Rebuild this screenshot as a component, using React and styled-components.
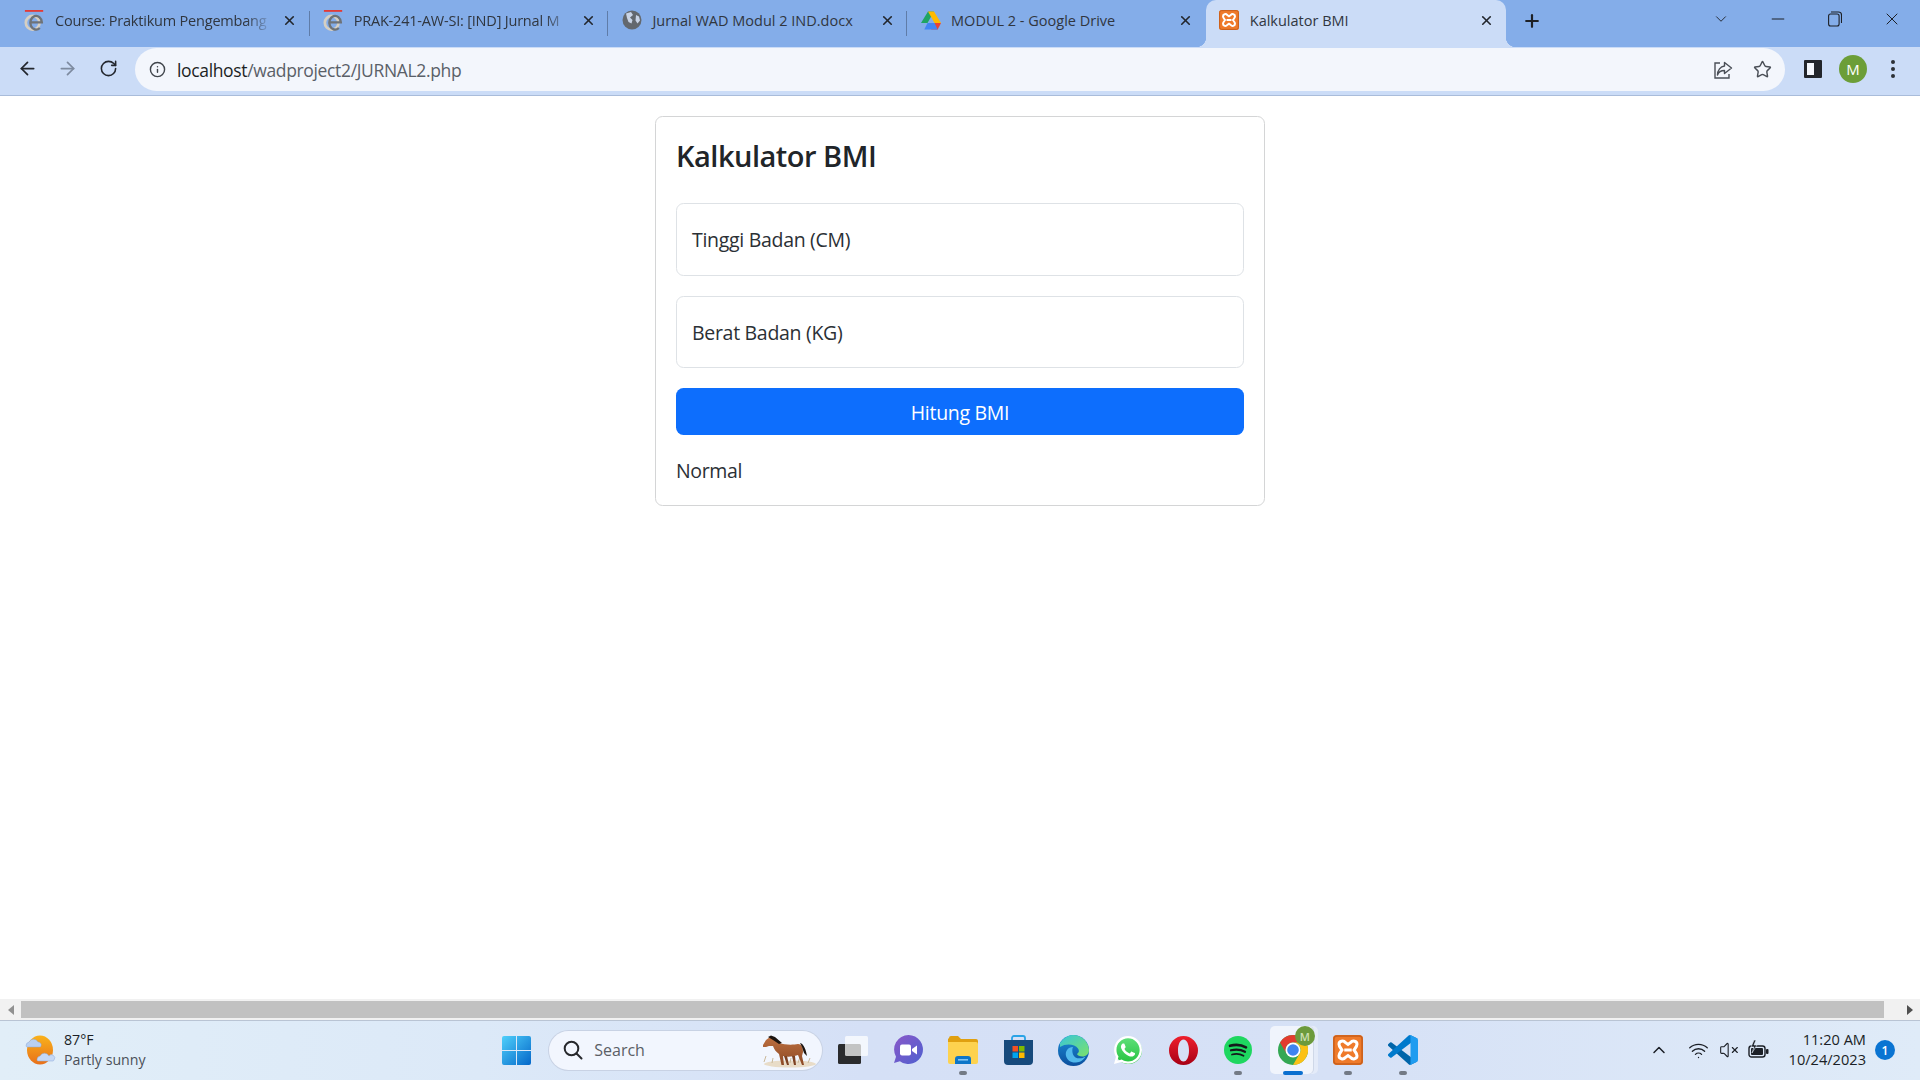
import React from "react";
import styled, { createGlobalStyle } from "styled-components";
import {
  ArrowLeft,
  ArrowRight,
  RotateCw,
  Info,
  Star,
  X,
  Plus,
  ChevronDown,
  ChevronUp,
  Minus,
  Wifi,
  VolumeX,
} from "lucide-react";
import { FaWhatsapp } from "react-icons/fa";

const GlobalStyle = createGlobalStyle`
  html, body { margin: 0; height: 100%; overflow: hidden; background: #fff; }
  #root { height: 100%; }
  * { box-sizing: border-box; }
`;

const uiFont = `"Open Sans", "Noto Sans", "Liberation Sans", sans-serif`;

const Screen = styled.div`
  width: 1920px;
  height: 1080px;
  display: flex;
  flex-direction: column;
  font-family: ${uiFont};
  color: #212529;
`;

/* browser chrome */
const TabStrip = styled.div`
  height: 47px;
  flex: none;
  background: #84ade9;
  display: flex;
  padding-left: 11px;
`;

const TabBox = styled.div`
  position: relative;
  width: ${(p) => (p.$active ? "300.5px" : "298.7px")};
  height: 47px;
  display: flex;
  align-items: center;
  gap: 10px;
  padding: 0 12.5px 7px 13px;
  border-radius: 10px 10px 0 0;
  background: ${(p) => (p.$active ? "#cbdcf7" : "transparent")};

  &::after {
    content: "";
    display: ${(p) => (p.$sep ? "block" : "none")};
    position: absolute;
    right: 0;
    top: 11px;
    height: 25px;
    width: 1px;
    background: #5f7ca8;
  }
`;

const Flare = styled.span`
  position: absolute;
  bottom: 0;
  width: 10px;
  height: 10px;
  ${(p) =>
    p.$left
      ? `left: -10px; background: radial-gradient(circle at 0 0, transparent 10px, #cbdcf7 10.5px);`
      : `right: -10px; background: radial-gradient(circle at 100% 0, transparent 10px, #cbdcf7 10.5px);`}
`;

const TabIcon = styled.span`
  width: 21px;
  height: 21px;
  flex: none;
  display: flex;
  align-items: center;
  justify-content: center;
`;

const TabTitle = styled.span`
  flex: 1;
  min-width: 0;
  font-size: 14.5px;
  letter-spacing: ${(p) => (p.$fade ? "-0.2px" : "0")};
  white-space: nowrap;
  color: #30363f;
  ${(p) =>
    p.$fade &&
    `mask-image: linear-gradient(to right, #000 calc(100% - 26px), transparent 100%);`}
`;

const TabClose = styled.span`
  flex: none;
  display: flex;
  color: #22262c;
`;

const NewTab = styled.span`
  display: flex;
  align-items: center;
  margin: 0 0 5px 16px;
  color: #1d2026;
`;

const WindowControls = styled.div`
  margin-left: auto;
  display: flex;
  align-items: center;
  padding: 0 0 9px 0;
  color: #1d2026;
`;

const WindowControl = styled.span`
  width: 57px;
  display: flex;
  justify-content: center;
`;

const Toolbar = styled.div`
  height: 49px;
  flex: none;
  background: #cbdcf7;
  border-bottom: 1px solid #a9bcda;
  display: flex;
  align-items: center;
  padding: 0 15px 3px 15px;
`;

const NavButton = styled.span`
  width: 24px;
  height: 24px;
  margin: 0 16.5px 2px 0;
  display: flex;
  align-items: center;
  justify-content: center;
  color: ${(p) => (p.$off ? "#7e8ba0" : "#23272e")};
`;

const Omnibox = styled.div`
  width: 1650px;
  height: 43px;
  margin-left: -1.5px;
  border-radius: 22px;
  background: #f3f6fc;
  display: flex;
  align-items: center;
  padding: 0 13px 0 14px;
`;

const SiteInfo = styled.span`
  display: flex;
  color: #3f444b;
  margin-right: 11px;
`;

const UrlText = styled.span`
  font-size: 17.5px;
  letter-spacing: -0.35px;
  color: #5a6068;
  flex: 1;
`;

const UrlHost = styled.span`
  color: #1c1f24;
`;

const OmniActions = styled.div`
  display: flex;
  align-items: center;
  gap: 20px;
  color: #4a4f57;
`;

const ToolActions = styled.div`
  display: flex;
  align-items: center;
  margin: 0 0 2px 19px;
  gap: 14px;
`;

const SidePanelIcon = styled.span`
  width: 18px;
  height: 18px;
  border: 3px solid #22252b;
  border-right-width: 8px;
  border-radius: 1px;
  background: #f3f6fc;
  margin-right: 3px;
`;

const Avatar = styled.span`
  width: 28px;
  height: 28px;
  border-radius: 50%;
  background: #6c9e38;
  color: #fff;
  font-size: 15px;
  display: flex;
  align-items: center;
  justify-content: center;
`;

const MenuDots = styled.span`
  display: flex;
  flex-direction: column;
  gap: 3px;
  margin-left: 10px;
  i {
    width: 4px;
    height: 4px;
    border-radius: 50%;
    background: #2c3036;
  }
`;

/* page */
const Page = styled.main`
  flex: 1;
  min-height: 0;
  background: #fff;
  padding-top: 20px;
`;

const Card = styled.section`
  width: 610px;
  height: 390px;
  margin: 0 auto;
  padding: 20px;
  border: 1.25px solid #d4d5d6;
  border-radius: 7.5px;
  background: #fff;
`;

const CardTitle = styled.h3`
  margin: -1px 0 27px;
  font-size: 29px;
  font-weight: 600;
  line-height: 40px;
  letter-spacing: -0.5px;
  color: #212529;
`;

const Field = styled.label`
  height: 72.5px;
  margin-bottom: 20px;
  display: flex;
  align-items: center;
  padding: 1px 0 0 15px;
  font-size: 19.5px;
  letter-spacing: -0.3px;
  border: 1.25px solid #dee2e6;
  border-radius: 7.5px;
  color: #2b3035;
`;

const SubmitButton = styled.button`
  display: block;
  width: 100%;
  height: 47px;
  padding: 1px 0 0;
  border: none;
  border-radius: 7.5px;
  background: #0d6efd;
  color: #fff;
  font-family: ${uiFont};
  font-size: 19.5px;
  letter-spacing: -0.3px;
`;

const ResultText = styled.p`
  margin: 21px 0 0;
  font-size: 19.5px;
  line-height: 30px;
  letter-spacing: -0.35px;
  color: #2b3035;
`;

/* horizontal scrollbar */
const ScrollBar = styled.div`
  height: 21px;
  flex: none;
  background: #f1f1f1;
  display: flex;
  align-items: center;
`;

const ScrollArrow = styled.span`
  width: 21px;
  flex: none;
  display: flex;
  justify-content: center;
  &::before {
    content: "";
    border-style: solid;
    border-width: 5px 0 5px 6px;
    border-color: transparent transparent transparent #505050;
    transform: ${(p) => (p.$left ? "rotate(180deg)" : "none")};
    opacity: ${(p) => (p.$left ? 0.6 : 1)};
  }
`;

const ScrollThumb = styled.span`
  flex: 1;
  height: 17px;
  background: #c1c1c1;
  margin-right: 15px;
`;

/* windows taskbar */
const Taskbar = styled.footer`
  height: 60px;
  flex: none;
  padding-bottom: 2px;
  border-top: 1px solid #b9c4d4;
  background: linear-gradient(90deg, #e1eef8 0%, #dce9f8 25%, #d5e0f6 45%, #d6e1f6 70%, #dfebf8 100%);
  display: grid;
  grid-template-columns: 1fr auto 1fr;
  align-items: center;
`;

const Weather = styled.div`
  display: flex;
  align-items: center;
  gap: 8px;
  padding-left: 24px;
`;

const WeatherText = styled.div`
  font-size: 14.2px;
  line-height: 20px;
  margin-bottom: 1px;
  color: #1b1f26;
  small {
    display: block;
    font-size: 14.2px;
    color: #4b5058;
  }
`;

const AppRow = styled.div`
  display: flex;
  align-items: center;
`;

const AppSlot = styled.div`
  position: relative;
  width: 55px;
  height: 58px;
  display: flex;
  align-items: center;
  justify-content: center;
  svg {
    position: relative;
  }
`;

const Pip = styled.span`
  position: absolute;
  left: 50%;
  bottom: 4px;
  width: ${(p) => (p.$wide ? "20px" : "8px")};
  height: 4px;
  margin-left: ${(p) => (p.$wide ? "-10px" : "-4px")};
  border-radius: 2px;
  background: ${(p) => (p.$wide ? "#0b6fcf" : "#737a85")};
`;

const ActiveBack = styled.span`
  position: absolute;
  left: 4px;
  top: 5px;
  width: 48px;
  height: 48px;
  border-radius: 5px;
  background: rgba(255, 255, 255, 0.35);
  &::before {
    content: "";
    position: absolute;
    inset: 0 5px 0 0;
    border-radius: 5px;
    background: rgba(255, 255, 255, 0.45);
    box-shadow: 1px 0 0 rgba(170, 180, 200, 0.35);
  }
`;

const AppBadge = styled.span`
  position: absolute;
  top: 5px;
  right: 6px;
  width: 20px;
  height: 20px;
  border-radius: 50%;
  background: #6c9a3c;
  color: #cfe0b5;
  font-size: 11px;
  font-weight: 600;
  display: flex;
  align-items: center;
  justify-content: center;
`;

const WhatsappMark = styled.span`
  position: relative;
  width: 32px;
  height: 32px;
  display: flex;
  align-items: center;
  justify-content: center;
  color: #fff;
  &::before {
    content: "";
    position: absolute;
    inset: 2.5px;
    border-radius: 50%;
    background: linear-gradient(#5fe07a, #25c23f);
  }
`;

const SearchPill = styled.div`
  width: 273px;
  height: 39px;
  margin: 0 3.5px 0 5px;
  border-radius: 20px;
  background: #f2f6fe;
  box-shadow: 0 0 0 1px #c8d2e4;
  display: flex;
  align-items: center;
  padding: 0 6px 0 14px;
  overflow: hidden;
`;

const SearchLabel = styled.span`
  font-size: 16px;
  color: #5b5f66;
  margin-left: 11px;
  flex: 1;
`;

const Tray = styled.div`
  display: flex;
  align-items: center;
  justify-content: flex-end;
  padding-right: 25px;
  color: #1b1f26;
`;

const TrayIcons = styled.div`
  display: flex;
  align-items: center;
  gap: 9.5px;
  margin-right: 19.5px;
`;

const TrayChevron = styled.span`
  display: flex;
  margin-right: 19px;
`;

const Clock = styled.div`
  text-align: right;
  font-size: 14.6px;
  line-height: 20px;
  margin-bottom: 2px;
  color: #1b1f26;
`;

const NotifyBadge = styled.span`
  width: 20px;
  height: 20px;
  margin-left: 9px;
  border-radius: 50%;
  background: #0a74d2;
  color: #fff;
  font-size: 12px;
  font-weight: 600;
  display: flex;
  align-items: center;
  justify-content: center;
`;

/* drawn icons */
const MoodleIcon = () => (
  <svg width="23" height="25" viewBox="0 0 23 25">
    <rect x="1" y="1" width="20" height="2" fill="#e23b37" />
    <circle cx="9.5" cy="15" r="7.5" fill="none" stroke="#d6cfc2" strokeWidth="3" />
    <path d="M7 14.5h12.5a6.3 7.5 0 1 0-2.2 6.2" fill="none" stroke="#6e7378" strokeWidth="2.6" />
  </svg>
);

const GlobeIcon = () => (
  <svg width="20" height="20" viewBox="0 0 20 20">
    <circle cx="10" cy="10" r="9.5" fill="#63686e" />
    <path d="M4 3.5 9 2l2 3-3 2.5 2.5 2.5-1 3.5-3-1.5L5 8z" fill="#c9d4e6" />
    <path d="M14 5l3 1.5 1 4-2.5 3-2-3z" fill="#c9d4e6" />
  </svg>
);

const DriveIcon = () => (
  <svg width="20" height="19" viewBox="0 0 20 18">
    <path d="M7 0h6l-6.5 11.5h-6.5z" fill="#1fa463" />
    <path d="M7 0h6l7 11.5h-6.5z" fill="#ffba00" />
    <path d="M13.5 11.5H20L16.7 18H10z" fill="#ea4335" />
    <path d="M3.3 18 6.5 11.5h7L16.7 18z" fill="#4285f4" />
  </svg>
);

const XamppIcon = ({ size = 20 }) => (
  <svg width={size} height={size} viewBox="0 0 20 20">
    <rect width="20" height="20" rx="2.5" fill="#ef7a2a" />
    <rect x="0.6" y="0.6" width="18.8" height="18.8" rx="2" fill="none" stroke="#c95f1b" strokeWidth="1" />
    <path
      d="M4 6.2C4 4 7 3.4 8.2 5l1.8 1.3L11.8 5c1.2-1.6 4.2-1 4.2 1.2 0 1.4-1 2.3-2 3.8 1 1.5 2 2.4 2 3.8 0 2.2-3 2.8-4.2 1.2L10 13.7 8.2 15C7 16.6 4 16 4 13.8c0-1.4 1-2.3 2-3.8-1-1.5-2-2.4-2-3.8z"
      fill="none"
      stroke="#fff"
      strokeWidth="2"
    />
    <path d="M7.5 10h5" stroke="#fff" strokeWidth="2" />
  </svg>
);

const ShareIcon = () => (
  <svg width="20" height="20" viewBox="0 0 20 20" fill="none" stroke="currentColor" strokeWidth="1.4">
    <path d="M7 3H2v15h14v-4" />
    <path d="M11.5 2.5 18.5 8l-7 5.5V10.5C8 10.5 5.5 12 4.5 15c0-5 3-8.5 7-9z" strokeLinejoin="round" />
  </svg>
);

const RestoreIcon = () => (
  <svg width="14" height="16" viewBox="0 0 14 16" fill="none" stroke="currentColor" strokeWidth="1.1">
    <rect x="0.6" y="3" width="10.5" height="12" rx="2" />
    <path d="M3 1h7.5a3 3 0 0 1 3 3v8" />
  </svg>
);

const WeatherIcon = () => (
  <svg width="32" height="30" viewBox="0 0 32 30">
    <defs>
      <linearGradient id="sun" x1="0" y1="0" x2="0" y2="1">
        <stop offset="0" stopColor="#f9b21b" />
        <stop offset="1" stopColor="#e8701a" />
      </linearGradient>
    </defs>
    <ellipse cx="16" cy="15" rx="13" ry="14.5" fill="url(#sun)" />
    <path d="M2 11a4 4 0 0 1 3-4 5 5 0 0 1 9 0 3 3 0 0 1 3 4 1.5 1.5 0 0 1-1 1H3a1.5 1.5 0 0 1-1-1z" fill="#b9d0f2" stroke="#8caadb" strokeWidth="0.5" />
    <path d="M13 25a4 4 0 0 1 3-4 5 5 0 0 1 9 0 3 3 0 0 1 5 4 1.5 1.5 0 0 1-1 1H14a1.5 1.5 0 0 1-1-1z" fill="#c5d8f5" stroke="#8caadb" strokeWidth="0.5" />
  </svg>
);

const WindowsLogo = () => (
  <svg width="29" height="29" viewBox="0 0 29 29">
    <defs>
      <linearGradient id="win" x1="0" y1="0" x2="1" y2="1">
        <stop offset="0" stopColor="#4fd0fb" />
        <stop offset="1" stopColor="#0467c9" />
      </linearGradient>
    </defs>
    <path d="M2 0h12v14H0V2a2 2 0 0 1 2-2zM15 0h12a2 2 0 0 1 2 2v12H15zM0 15h14v14H2a2 2 0 0 1-2-2zM15 15h14v12a2 2 0 0 1-2 2H15z" fill="url(#win)" />
  </svg>
);

const SearchGlyph = () => (
  <svg width="20" height="20" viewBox="0 0 20 20" fill="none" stroke="#26282c" strokeWidth="2">
    <circle cx="8.5" cy="8.5" r="6.8" />
    <path d="M13.5 13.5 18.5 18.5" strokeLinecap="round" />
  </svg>
);

const HorseArt = () => (
  <svg width="56" height="37" viewBox="0 0 56 37">
    <defs>
      <linearGradient id="coat" x1="0" y1="0" x2="0" y2="1">
        <stop offset="0" stopColor="#bd6f40" />
        <stop offset="1" stopColor="#8d4a26" />
      </linearGradient>
    </defs>
    <ellipse cx="30" cy="32" rx="26" ry="3.5" fill="#e8dcc8" />
    <path d="M4 30l2-6M12 31l1-5M30 31l1-5M38 31l2-6M48 31l2-5" stroke="#c9b899" strokeWidth="1" />
    <path
      d="M3 13 6 8l4-3 4 2 5 4c6 2 14 2 19 1 4 0 5 4 5 8l-1 4 2 9h-2l-4-10c-6 2-11 2-15 1l1 9h-2.5L19 22c-3-2-5-5-6-8H9l-3 1H3z"
      fill="url(#coat)"
    />
    <path d="M27 24l2 9h-2l-3-9zM35 24l1 9h-2l-2-9z" fill="#7d4122" />
    <path d="M8 5l3-1.500 4 1.500 7 6-3 1-6-4z" fill="#1d1510" />
    <path d="M40 11c4 1 6 7 7 13l-3-3-2-6z" fill="#1d1510" />
  </svg>
);

const TaskViewIcon = () => (
  <svg width="30" height="28" viewBox="0 0 30 28">
    <rect x="0" y="8" width="23" height="20" rx="1.5" fill="#2a2b2d" />
    <rect x="7" y="0" width="23" height="20" rx="1.5" fill="#fff" fillOpacity="0.72" />
  </svg>
);

const MeetIcon = () => (
  <svg width="30" height="30" viewBox="0 0 30 30">
    <defs>
      <linearGradient id="meet" x1="0" y1="0" x2="1" y2="1">
        <stop offset="0" stopColor="#8a58c9" />
        <stop offset="1" stopColor="#4e60cf" />
      </linearGradient>
    </defs>
    <path d="M15.5 0a14.5 14.5 0 1 1-8.6 26.2L1 28l2-6.3A14.5 14.5 0 0 1 15.5 0z" fill="url(#meet)" />
    <rect x="7" y="9.5" width="11" height="11" rx="2" fill="#fff" />
    <path d="M19 14l5-3.5v9L19 16z" fill="#fff" />
  </svg>
);

const FolderIcon = () => (
  <svg width="30" height="28" viewBox="0 0 30 28">
    <path d="M1 2a2 2 0 0 1 2-2h7l3 3h15a2 2 0 0 1 2 2v3H0V3z" fill="#e0a010" />
    <path d="M0 6h28a2 2 0 0 1 2 2v18a2 2 0 0 1-2 2H2a2 2 0 0 1-2-2z" fill="#fdd24f" />
    <path d="M7 28v-5a3 3 0 0 1 3-3h10a3 3 0 0 1 3 3v5z" fill="#0d75c8" />
    <rect x="10" y="23" width="10" height="1.6" fill="#7fc3f2" />
  </svg>
);

const StoreIcon = () => (
  <svg width="29" height="30" viewBox="0 0 29 30">
    <path d="M8 6V3a2 2 0 0 1 2-2h9a2 2 0 0 1 2 2v3" fill="none" stroke="#2aa3e6" strokeWidth="1.8" />
    <path d="M0 5h29v21a4 4 0 0 1-4 4H4a4 4 0 0 1-4-4z" fill="#174a7c" />
    <rect x="8.500" y="11" width="5.500" height="5.500" fill="#f25022" />
    <rect x="15" y="11" width="5.500" height="5.500" fill="#7fba00" />
    <rect x="8.500" y="17.500" width="5.500" height="5.500" fill="#00a4ef" />
    <rect x="15" y="17.500" width="5.500" height="5.500" fill="#ffb900" />
  </svg>
);

const EdgeIcon = () => (
  <svg width="31" height="31" viewBox="0 0 31 31">
    <defs>
      <linearGradient id="edgeA" x1="0" y1="0" x2="1" y2="1">
        <stop offset="0" stopColor="#38c6d8" />
        <stop offset="1" stopColor="#7ce26a" />
      </linearGradient>
      <linearGradient id="edgeB" x1="0" y1="0" x2="0" y2="1">
        <stop offset="0" stopColor="#1b8fd8" />
        <stop offset="1" stopColor="#0c4f9e" />
      </linearGradient>
    </defs>
    <circle cx="15.5" cy="15.5" r="15.5" fill="url(#edgeB)" />
    <path d="M2 8A15.5 15.5 0 0 1 31 15c0 4-3 6.5-6.5 6.5-3 0-5-1-5.5-2.5 2-1.5 2.5-3 1-5.5C17 9 8 8 2 12z" fill="url(#edgeA)" />
    <path d="M15 12c-5 0-8 4-7 9 1 4 5 7 10 6.5 4-.3 8-2.5 9.5-6-3 2-7 2.5-10 1-3-2-4-7-2.5-10.5z" fill="#52b9ec" />
  </svg>
);

const OperaIcon = () => (
  <svg width="29" height="29" viewBox="0 0 29 29">
    <defs>
      <linearGradient id="opera" x1="0" y1="0" x2="0" y2="1">
        <stop offset="0" stopColor="#ef1f2d" />
        <stop offset="1" stopColor="#a70014" />
      </linearGradient>
    </defs>
    <path fillRule="evenodd" d="M14.5 0a14.5 14.5 0 1 1 0 29 14.5 14.5 0 0 1 0-29zm0 3.5c-3.5 0-5.5 5-5.5 11s2 11 5.5 11 5.5-5 5.5-11-2-11-5.5-11z" fill="url(#opera)" />
  </svg>
);

const SpotifyIcon = () => (
  <svg width="28" height="28" viewBox="0 0 28 28">
    <circle cx="14" cy="14" r="14" fill="#1ed760" />
    <g fill="none" stroke="#15191c" strokeLinecap="round">
      <path d="M6 9.8c5.5-1.6 11.5-1 16 1.6" strokeWidth="2.6" />
      <path d="M7 14.3c4.8-1.3 10-.8 14 1.5" strokeWidth="2.2" />
      <path d="M8 18.5c4-1 8.3-.6 11.5 1.3" strokeWidth="1.8" />
    </g>
  </svg>
);

const ChromeIcon = () => (
  <svg width="30" height="30" viewBox="0 0 30 30">
    <circle cx="15" cy="15" r="15" fill="#35a853" />
    <path d="M15 0a15 15 0 0 1 13 7.5H15a7.5 7.5 0 0 0-6.5 11.2L2 7.5A15 15 0 0 1 15 0z" fill="#e33b2e" />
    <path d="M28 7.5A15 15 0 0 1 15 30l6.5-11.2A7.5 7.5 0 0 0 15 7.5z" fill="#fbc116" />
    <circle cx="15" cy="15" r="7.5" fill="#fff" />
    <circle cx="15" cy="15" r="5.8" fill="#3f84ef" />
  </svg>
);

const VsCodeIcon = () => (
  <svg width="30" height="30" viewBox="0 0 100 100">
    <path d="M96.46 89.2 75.86 99.1a6.23 6.23 0 0 1-7.1-1.2L1.3 36.3a4.17 4.17 0 0 1 0-6.16l5.5-5a4.17 4.17 0 0 1 5.32-.24L93.4 86.6c2.73 2.07 6.65.12 6.65-3.3v.24a6.25 6.25 0 0 1-3.54 5.63z" fill="#0065a9" />
    <path d="M96.46 10.8 75.86.87a6.23 6.23 0 0 0-7.1 1.2L1.3 63.6a4.17 4.17 0 0 0 0 6.16l5.5 5a4.17 4.17 0 0 0 5.32.24L93.4 13.37c2.73-2.07 6.65-.12 6.65 3.3v-.24a6.25 6.25 0 0 0-3.54-5.63z" fill="#007acc" />
    <path d="M75.86 99.1a6.25 6.25 0 0 1-7.1-1.2c2.3 2.3 6.24.67 6.24-2.6V4.7c0-3.27-3.93-4.9-6.24-2.6a6.25 6.25 0 0 1 7.1-1.2l20.6 9.9A6.25 6.25 0 0 1 100 16.4v67.2a6.25 6.25 0 0 1-3.54 5.63z" fill="#1f9cf0" />
  </svg>
);

const BatteryIcon = () => (
  <svg width="21" height="20" viewBox="0 0 21 20">
    <rect x="1" y="6" width="16" height="11" rx="2.5" fill="none" stroke="#1b1f26" strokeWidth="1.4" />
    <rect x="3" y="8" width="12" height="7" rx="1" fill="#1b1f26" />
    <rect x="18" y="9" width="2.5" height="5" rx="1" fill="#1b1f26" />
    <path d="M6 0 3 7h3l-2 6 5-8H6l2-5z" fill="#1b1f26" stroke="#e0ecf8" strokeWidth="0.6" />
  </svg>
);

const tabs = [
  { title: "Course: Praktikum Pengembang", icon: <MoodleIcon />, fade: true, sep: true },
  { title: "PRAK-241-AW-SI: [IND] Jurnal M", icon: <MoodleIcon />, fade: true, sep: true },
  { title: "Jurnal WAD Modul 2 IND.docx", icon: <GlobeIcon />, sep: true },
  { title: "MODUL 2 - Google Drive", icon: <DriveIcon /> },
  { title: "Kalkulator BMI", icon: <XamppIcon />, active: true },
];

function Tab({ tab }) {
  return (
    <TabBox $active={tab.active} $sep={tab.sep}>
      {tab.active && <Flare $left />}
      {tab.active && <Flare />}
      <TabIcon>{tab.icon}</TabIcon>
      <TabTitle $fade={tab.fade}>{tab.title}</TabTitle>
      <TabClose>
        <X size={15} strokeWidth={2.6} />
      </TabClose>
    </TabBox>
  );
}

export default function App() {
  return (
    <Screen>
      <GlobalStyle />
      <TabStrip>
        {tabs.map((tab) => (
          <Tab key={tab.title} tab={tab} />
        ))}
        <NewTab>
          <Plus size={20} strokeWidth={2.6} />
        </NewTab>
        <WindowControls>
          <WindowControl>
            <ChevronDown size={18} strokeWidth={1.2} />
          </WindowControl>
          <WindowControl>
            <Minus size={20} strokeWidth={1.2} />
          </WindowControl>
          <WindowControl>
            <RestoreIcon />
          </WindowControl>
          <WindowControl>
            <X size={20} strokeWidth={1.2} />
          </WindowControl>
        </WindowControls>
      </TabStrip>

      <Toolbar>
        <NavButton>
          <ArrowLeft size={21} strokeWidth={2} />
        </NavButton>
        <NavButton $off>
          <ArrowRight size={21} strokeWidth={2} />
        </NavButton>
        <NavButton>
          <RotateCw size={19} strokeWidth={2} />
        </NavButton>
        <Omnibox>
          <SiteInfo>
            <Info size={17} strokeWidth={2} />
          </SiteInfo>
          <UrlText>
            <UrlHost>localhost</UrlHost>/wadproject2/JURNAL2.php
          </UrlText>
          <OmniActions>
            <ShareIcon />
            <Star size={19} strokeWidth={1.8} />
          </OmniActions>
        </Omnibox>
        <ToolActions>
          <SidePanelIcon />
          <Avatar>M</Avatar>
          <MenuDots>
            <i />
            <i />
            <i />
          </MenuDots>
        </ToolActions>
      </Toolbar>

      <Page>
        <Card>
          <CardTitle>Kalkulator BMI</CardTitle>
          <Field>Tinggi Badan (CM)</Field>
          <Field>Berat Badan (KG)</Field>
          <SubmitButton type="button">Hitung BMI</SubmitButton>
          <ResultText>Normal</ResultText>
        </Card>
      </Page>

      <ScrollBar>
        <ScrollArrow $left />
        <ScrollThumb />
        <ScrollArrow />
      </ScrollBar>

      <Taskbar>
        <Weather>
          <WeatherIcon />
          <WeatherText>
            87°F
            <small>Partly sunny</small>
          </WeatherText>
        </Weather>

        <AppRow>
          <AppSlot>
            <WindowsLogo />
          </AppSlot>
          <SearchPill>
            <SearchGlyph />
            <SearchLabel>Search</SearchLabel>
            <HorseArt />
          </SearchPill>
          <AppSlot>
            <TaskViewIcon />
          </AppSlot>
          <AppSlot>
            <MeetIcon />
          </AppSlot>
          <AppSlot>
            <FolderIcon />
            <Pip />
          </AppSlot>
          <AppSlot>
            <StoreIcon />
          </AppSlot>
          <AppSlot>
            <EdgeIcon />
          </AppSlot>
          <AppSlot>
            <WhatsappMark>
              <FaWhatsapp size={32} />
            </WhatsappMark>
          </AppSlot>
          <AppSlot>
            <OperaIcon />
          </AppSlot>
          <AppSlot>
            <SpotifyIcon />
            <Pip />
          </AppSlot>
          <AppSlot>
            <ActiveBack />
            <ChromeIcon />
            <AppBadge>M</AppBadge>
            <Pip $wide />
          </AppSlot>
          <AppSlot>
            <XamppIcon size={30} />
            <Pip />
          </AppSlot>
          <AppSlot>
            <VsCodeIcon />
            <Pip />
          </AppSlot>
        </AppRow>

        <Tray>
          <TrayChevron>
            <ChevronUp size={20} strokeWidth={1.8} />
          </TrayChevron>
          <TrayIcons>
            <Wifi size={21} strokeWidth={1.5} />
            <VolumeX size={20} strokeWidth={1.3} />
            <BatteryIcon />
          </TrayIcons>
          <Clock>
            11:20 AM
            <br />
            10/24/2023
          </Clock>
          <NotifyBadge>1</NotifyBadge>
        </Tray>
      </Taskbar>
    </Screen>
  );
}
